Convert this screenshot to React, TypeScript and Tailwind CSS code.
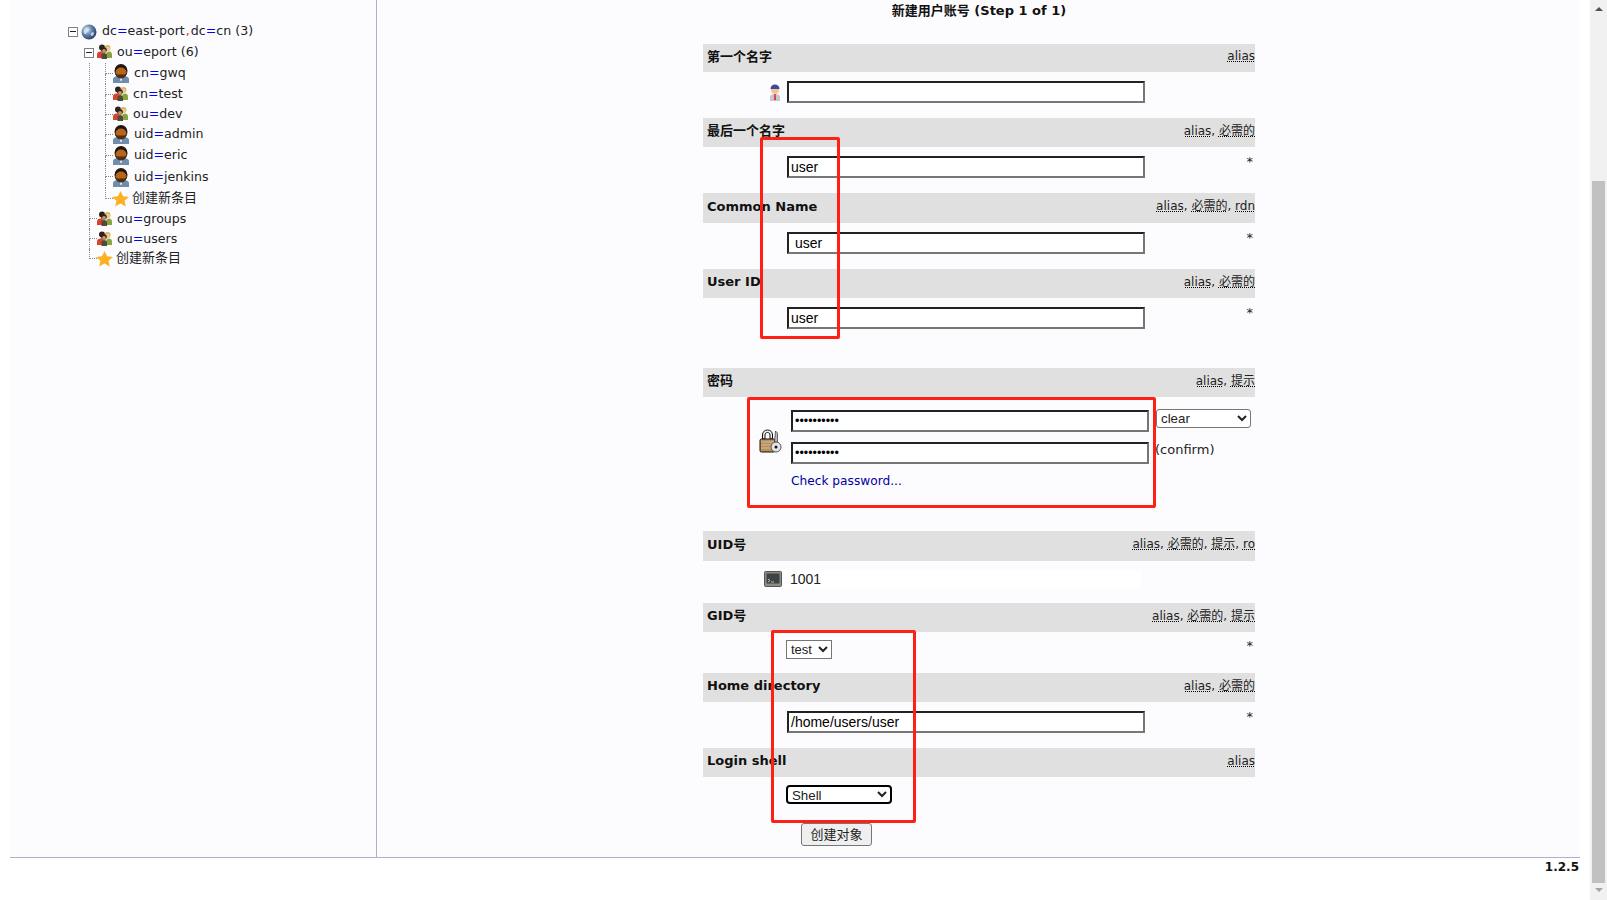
import React from "react";

type Guide = "none" | "line" | "tee" | "end" | "toggle";

const Globe = () => (
  <svg width="16" height="16" viewBox="0 0 16 16" className="shrink-0">
    <defs>
      <radialGradient id="globe" cx="35%" cy="35%" r="75%">
        <stop offset="0%" stopColor="#e8eef6" />
        <stop offset="45%" stopColor="#6487b2" />
        <stop offset="100%" stopColor="#1f3554" />
      </radialGradient>
    </defs>
    <circle cx="8" cy="8" r="7.5" fill="url(#globe)" />
    <path d="M3 6c2-2 4-2 5-1s-1 2-2 3-1 3-2 2-2-2-1-4zM10 9c1-1 3-1 3 0s-1 3-2 3-2-2-1-3z" fill="#dfe6ee" opacity="0.8" />
  </svg>
);

const Group = () => (
  <svg width="15" height="15" viewBox="0 0 15 15" className="shrink-0 -mt-[2px]">
    <circle cx="5" cy="3.5" r="3" fill="#2b2320" />
    <circle cx="10.500" cy="4" r="3" fill="#d9b25e" />
    <circle cx="10.800" cy="4.800" r="2" fill="#efc9a0" />
    <path d="M0 14v-3.500C0 8.500 1.500 7.500 3.500 7.500S6 8.500 6 10.500V14z" fill="#d8432c" />
    <path d="M9 14v-3.500c0-2 1.500-3 3-3s3 1 3 3V14z" fill="#8aa33c" />
    <circle cx="7" cy="6" r="2.800" fill="#2f221a" />
    <circle cx="7" cy="6.800" r="1.900" fill="#d0935c" />
    <path d="M4.500 15v-3.500C4.500 10 5.500 9 7 9s3 1 3 2.500V15z" fill="#4e4a3c" />
  </svg>
);

const Person = () => (
  <svg width="16" height="19" viewBox="0 0 16 19" className="shrink-0">
    <path d="M0 19v-4c0-1.500 1.500-2.500 4-3h8c2.500.5 4 1.500 4 3v4z" fill="#6f8eae" />
    <path d="M6.500 13.500h3L8.600 17H7.400z" fill="#dfe6ee" />
    <ellipse cx="8" cy="7" rx="6.500" ry="7" fill="#20160e" />
    <ellipse cx="8" cy="8.500" rx="5.500" ry="5" fill="#b5651c" />
    <path d="M2.800 9.500c1 1 2.700 1 5.200 1s4.200 0 5.200-1c0 3-2.500 5-5.200 5s-5.200-2-5.200-5z" fill="#4d2f14" />
  </svg>
);

const Star = () => (
  <svg width="17" height="16" viewBox="0 0 16 16" preserveAspectRatio="none" className="shrink-0 -ml-px">
    <path d="M8 0l2.400 5.300 5.600.6-4.200 3.800 1.200 5.800L8 12.500l-5 3 1.200-5.800L0 5.900l5.600-.6z" fill="#fdb022" />
  </svg>
);

const Toggle = () => (
  <span className="w-[10px] h-[10px] border border-[#808080] bg-white flex items-center justify-center shrink-0">
    <span className="w-[6px] h-px bg-[#222]" />
  </span>
);

const SmallUser = () => (
  <svg width="12" height="17" viewBox="0 0 12 17">
    <path d="M1 17v-4c0-2 2-3 5-3s5 1 5 3v4z" fill="#c6c6d0" />
    <path d="M5.300 10h1.400l.3 6H5z" fill="#e0352b" />
    <circle cx="6" cy="6" r="4" fill="#f4c29c" />
    <path d="M1.500 5C1.500 2 3.500.5 6 .5S10.500 2 10.500 5z" fill="#3c4a9c" />
  </svg>
);

const LockKey = () => (
  <svg width="23" height="24" viewBox="0 0 23 24">
    <path d="M3.500 10V6c0-3 2-5 5-5s5 2 5 5v4H11V6c0-1.500-1-2.500-2.500-2.500S6 4.500 6 6v4z" fill="#eee" stroke="#111" />
    <rect x="1" y="10" width="15" height="13" rx="1.500" fill="#b98f5c" stroke="#111" />
    <path d="M2 13h13M2 16h13M2 19h13" stroke="#d8bc94" />
    <path d="M16.500 2l2 2v9h-3z" fill="#bbb" stroke="#333" strokeWidth="0.700" />
    <circle cx="17" cy="18" r="5" fill="#e4e4e4" stroke="#555" />
    <circle cx="17" cy="18" r="1.500" fill="#111" />
  </svg>
);

const Terminal = () => (
  <svg width="18" height="16" viewBox="0 0 18 16" className="shrink-0">
    <rect x="0.500" y="0.500" width="17" height="15" rx="1" fill="#8d8d85" stroke="#555" />
    <rect x="2.500" y="2.500" width="13" height="10" fill="#3d4442" />
    <path d="M4 8l2 1.500L4 11M7 11h3" stroke="#d8d8d8" fill="none" strokeWidth="0.800" />
  </svg>
);

const TreeGuide = ({ kind }: { kind: Guide }) => {
  if (kind === "toggle") {
    return (
      <span className="w-4 h-full flex items-center justify-center shrink-0">
        <Toggle />
      </span>
    );
  }
  if (kind === "none") return <span className="w-4 h-full shrink-0" />;
  if (kind === "line") {
    return (
      <span className="w-4 h-full shrink-0 block">
        <span className="block ml-2 h-full border-l border-dotted border-[#888]" />
      </span>
    );
  }
  return (
    <span className="w-4 h-full shrink-0 flex flex-col">
      <span className="block ml-2 h-1/2 border-l border-b border-dotted border-[#888]" />
      {kind === "tee" && <span className="block ml-2 h-1/2 border-l border-dotted border-[#888]" />}
    </span>
  );
};

const Dn = ({ text }: { text: string }) => (
  <>
    {text.split(/([=,])/).map((part, i) => (
      <span key={i} className={part === "=" ? "text-[#0000ff]" : part === "," ? "text-[#ff2020] mx-px" : ""}>
        {part}
      </span>
    ))}
  </>
);

interface TreeRowProps {
  guides: Guide[];
  icon: React.ReactNode;
  label: string;
  height: string;
  plain?: boolean;
}

const TreeRow = ({ guides, icon, label, height, plain }: TreeRowProps) => (
  <div className={`flex items-center pl-[55px] whitespace-nowrap ${height}`}>
    {guides.map((g, i) => (
      <TreeGuide key={i} kind={g} />
    ))}
    {icon}
    <span className={plain ? "ml-[3px] text-[13px] -mt-[2px]" : "ml-[5px]"}>
      <Dn text={label} />
    </span>
  </div>
);

const Hint = ({ items }: { items: string[] }) => (
  <span className="overflow-hidden whitespace-nowrap font-normal text-[12px] text-[#222] pb-[1px]">
    {items.map((item, i) => (
      <React.Fragment key={item}>
        {i > 0 && ", "}
        <span className="underline decoration-dotted decoration-black underline-offset-1">{item}</span>
      </React.Fragment>
    ))}
  </span>
);

const AttrHeader = ({ label, hints, height }: { label: string; hints: string[]; height: string }) => (
  <div className={`flex justify-between items-center bg-[#e0e0e0] pl-[4px] pb-[3px] font-bold text-[13px] text-[#111] ${height}`}>
    <span className="whitespace-nowrap">{label}</span>
    <Hint items={hints} />
  </div>
);

const inputClass =
  "block w-[358px] h-[22px] bg-white border-2 border-t-[#222] border-l-[#222] border-r-[#767676] border-b-[#767676] px-[2px] text-[14px] text-black [font-family:'Liberation_Sans',Arial,sans-serif]";

const Asterisk = () => <span className="ml-auto text-[13px] leading-none text-[#222] pr-[2px] -mt-[1px]">*</span>;

const AttrInput = ({ value, height, icon, required = true }: { value: string; height: string; icon?: React.ReactNode; required?: boolean }) => (
  <div className={`flex items-start pt-[9px] ${height}`}>
    <div className="w-[84px] flex justify-end pr-[6px] pt-[3px] shrink-0">{icon}</div>
    <input className={inputClass} readOnly value={value} />
    {required && <Asterisk />}
  </div>
);

const App = () => {
  return (
    <div className="relative w-[1607px] h-[900px] overflow-hidden bg-white flex [font-family:'DejaVu_Sans','Noto_Sans_CJK_SC',sans-serif] text-[13px] text-[#222]">
      <div className="ml-[10px] w-[1570px] flex flex-col">
        <div className="h-[858px] flex bg-[#fcfcff] border-b border-[#b0b0cc]">
          <aside className="w-[367px] border-r border-[#b0b0cc] pt-[21px] text-[12.6px] shrink-0">
            <TreeRow height="h-[21px]" guides={["toggle"]} icon={<Globe />} label="dc=east-port,dc=cn (3)" />
            <TreeRow height="h-[21px]" guides={["none", "toggle"]} icon={<Group />} label="ou=eport (6)" />
            <TreeRow height="h-[21px]" guides={["none", "line", "tee"]} icon={<Person />} label="cn=gwq" />
            <TreeRow height="h-[21px]" guides={["none", "line", "tee"]} icon={<Group />} label="cn=test" />
            <TreeRow height="h-[19px]" guides={["none", "line", "tee"]} icon={<Group />} label="ou=dev" />
            <TreeRow height="h-[21px]" guides={["none", "line", "tee"]} icon={<Person />} label="uid=admin" />
            <TreeRow height="h-[21px]" guides={["none", "line", "tee"]} icon={<Person />} label="uid=eric" />
            <TreeRow height="h-[22px]" guides={["none", "line", "tee"]} icon={<Person />} label="uid=jenkins" />
            <TreeRow height="h-[21px]" guides={["none", "line", "end"]} icon={<Star />} label="创建新条目" plain />
            <TreeRow height="h-[20px]" guides={["none", "tee"]} icon={<Group />} label="ou=groups" />
            <TreeRow height="h-[20px]" guides={["none", "tee"]} icon={<Group />} label="ou=users" />
            <TreeRow height="h-[20px]" guides={["none", "end"]} icon={<Star />} label="创建新条目" plain />
          </aside>

          <main className="flex-1 pl-[326px]">
            <div className="w-[552px]">
              <h3 className="h-[44px] text-center font-bold text-[13px] leading-[22px] text-[#111]">新建用户账号 (Step 1 of 1)</h3>

              <AttrHeader height="h-[28px]" label="第一个名字" hints={["alias"]} />
              <AttrInput height="h-[46px]" value="" icon={<SmallUser />} required={false} />

              <AttrHeader height="h-[29px]" label="最后一个名字" hints={["alias", "必需的"]} />
              <AttrInput height="h-[46px]" value="user" />

              <AttrHeader height="h-[30px]" label="Common Name" hints={["alias", "必需的", "rdn"]} />
              <AttrInput height="h-[46px]" value=" user" />

              <AttrHeader height="h-[29px]" label="User ID" hints={["alias", "必需的"]} />
              <AttrInput height="h-[70px]" value="user" />

              <AttrHeader height="h-[29px]" label="密码" hints={["alias", "提示"]} />
              <div className="h-[134px] flex items-start pt-[13px]">
                <div className="w-[88px] flex justify-end pr-[9px] pt-[19px] shrink-0">
                  <LockKey />
                </div>
                <div className="flex flex-col gap-[10px]">
                  <input type="password" readOnly value="xxxxxxxxxx" className={`${inputClass} !text-[12.5px]`} />
                  <input type="password" readOnly value="xxxxxxxxxx" className={`${inputClass} !text-[12.5px]`} />
                  <a className="-mt-[2px] text-[12.2px] text-[#0000a0]">Check password...</a>
                </div>
                <div className="pl-[7px] -mt-[1px] flex flex-col">
                  <select className="w-[95px] h-[19px] border border-[#767676] rounded-[3px] bg-white text-[13.3px] [font-family:'Liberation_Sans',Arial,sans-serif]">
                    <option>clear</option>
                  </select>
                  <span className="mt-[12px] -ml-[1px]">(confirm)</span>
                </div>
              </div>

              <AttrHeader height="h-[30px]" label="UID号" hints={["alias", "必需的", "提示", "ro"]} />
              <div className="h-[42px] flex items-start pt-[9px]">
                <div className="w-[81px] flex pl-[61px] pt-[1px] shrink-0">
                  <Terminal />
                </div>
                <div className="w-[357px] h-[18px] bg-white pl-[6px] text-[14px] leading-[18px] [font-family:'Liberation_Sans',Arial,sans-serif]">1001</div>
              </div>

              <AttrHeader height="h-[29px]" label="GID号" hints={["alias", "必需的", "提示"]} />
              <div className="h-[41px] flex items-start pt-[8px]">
                <div className="w-[83px] shrink-0" />
                <select className="w-[46px] h-[19px] border border-[#767676] bg-white text-[13px] [font-family:'Liberation_Sans',Arial,sans-serif]">
                  <option>test</option>
                </select>
                <Asterisk />
              </div>

              <AttrHeader height="h-[29px]" label="Home directory" hints={["alias", "必需的"]} />
              <AttrInput height="h-[46px]" value="/home/users/user" />

              <AttrHeader height="h-[29px]" label="Login shell" hints={["alias"]} />
              <div className="pt-[8px] pl-[83px]">
                <select className="block w-[106px] h-[19px] border-2 border-black rounded-[4px] bg-white text-[13.3px] [font-family:'Liberation_Sans',Arial,sans-serif]">
                  <option>Shell</option>
                </select>
                <button className="block ml-[15px] mt-[19px] w-[71px] h-[23px] bg-[#efefef] border border-[#767676] rounded-[3px] text-[13px] text-[#222]">创建对象</button>
              </div>
            </div>
          </main>
        </div>
        <div className="text-right font-bold text-[12px] leading-[18px] text-[#111] pr-px">1.2.5</div>
      </div>

      <div className="ml-auto w-[17px] h-full bg-[#f1f1f1] flex flex-col items-center shrink-0">
        <div className="h-[181px] pt-[7px] w-full flex justify-center">
          <span className="w-0 h-0 border-x-[4px] border-x-transparent border-b-[4px] border-b-[#505050]" />
        </div>
        <div className="w-[13px] h-[702px] bg-[#c1c1c1]" />
        <div className="pt-[5px]">
          <span className="block w-0 h-0 border-x-[4px] border-x-transparent border-t-[4px] border-t-[#a3a3a3]" />
        </div>
      </div>

      {/* red annotation boxes drawn over the form */}
      <div className="absolute left-[760px] top-[137px] w-[80px] h-[202px] border-[3px] border-[#ff2015] rounded-[2px]" />
      <div className="absolute left-[747px] top-[397px] w-[409px] h-[111px] border-[3px] border-[#ff2015] rounded-[2px]" />
      <div className="absolute left-[771px] top-[630px] w-[145px] h-[193px] border-[3px] border-[#ff2015] rounded-[2px]" />
    </div>
  );
};

export default App;
